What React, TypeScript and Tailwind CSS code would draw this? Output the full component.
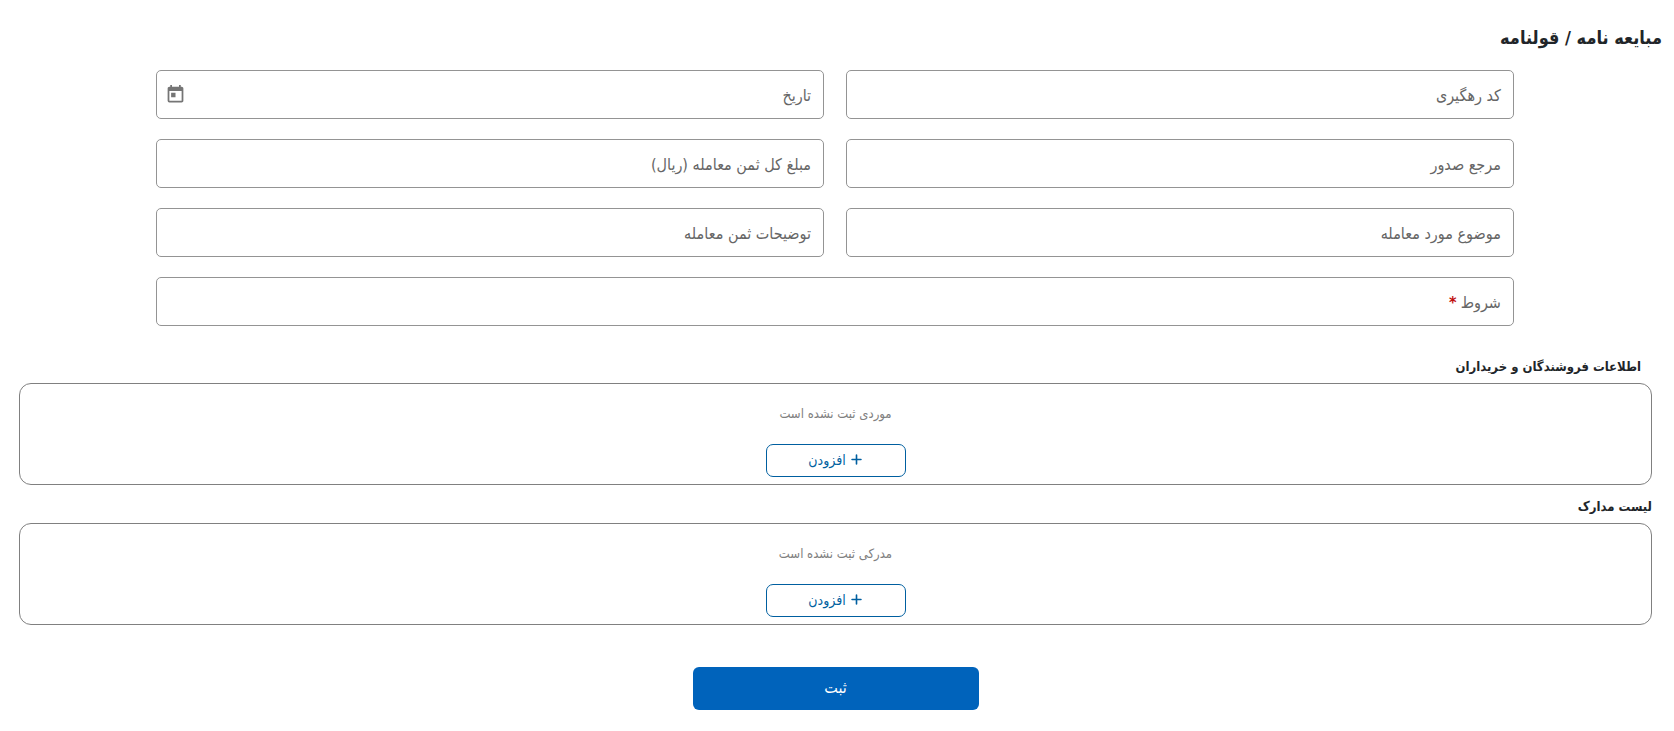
import type { ReactNode } from "react";
import { FaPlus } from "react-icons/fa6";
import { MdToday } from "react-icons/md";

const fields = [
  { id: "trackingCode", label: "کد رهگیری" },
  { id: "date", label: "تاریخ", calendar: true },
  { id: "issuer", label: "مرجع صدور" },
  { id: "totalPrice", label: "مبلغ کل ثمن معامله (ریال)" },
  { id: "subject", label: "موضوع مورد معامله" },
  { id: "priceNotes", label: "توضیحات ثمن معامله" },
  { id: "terms", label: "شروط", required: true },
];

type FieldProps = {
  id: string;
  label: string;
  calendar?: boolean;
  required?: boolean;
};

function Field({ id, label, calendar, required }: FieldProps) {
  return (
    <div
      className={`flex h-[49px] items-center rounded-[5px] border border-[#949494] pr-3 pl-2 ${
        required ? "col-span-2" : ""
      }`}
    >
      <label htmlFor={id} className="shrink-0 pt-0.5 text-base text-[#666]">
        {label}
        {required && <span className="mr-1 font-bold text-[#c00d0d]">*</span>}
      </label>
      <input id={id} name={id} required={required} className="h-full min-w-0 flex-1 px-2 text-base outline-none" />
      {calendar && (
        <button type="button" aria-label="تقویم" className="text-[#757575]">
          <MdToday className="size-[21px]" />
        </button>
      )}
    </div>
  );
}

function Panel({ title, empty, inset }: { title: ReactNode; empty: string; inset?: boolean }) {
  return (
    <section>
      <h2 className={`text-[13px] leading-8 font-bold text-[#212529] ${inset ? "pr-[11px]" : ""}`}>{title}</h2>
      <div className="flex flex-col items-center rounded-xl border border-[#808080] pt-[18px] pb-[7px]">
        <p className="text-[13px] leading-6 text-[#808080]">{empty}</p>
        <button
          type="button"
          className="mt-[18px] flex h-[33px] w-[140px] items-center justify-center gap-1 rounded-[7px] border border-[#005fa0] pb-0.5 text-sm text-[#005fa0]"
        >
          <FaPlus className="size-[13px]" />
          افزودن
        </button>
      </div>
    </section>
  );
}

export default function App() {
  return (
    <main dir="rtl" className="bg-white pt-5 pb-5 font-['DejaVu_Sans_Condensed','DejaVu_Sans',sans-serif]">
      <h1 className="pr-3 text-lg leading-9 font-bold text-[#212529]">مبایعه نامه / قولنامه</h1>
      <form className="mt-[14px] pr-[22px] pl-[19px]">
        <div className="mx-auto grid w-10/12 grid-cols-2 gap-x-[22px] gap-y-5 pr-0.5 pl-px">
          {fields.map((field) => (
            <Field key={field.id} {...field} />
          ))}
        </div>

        <div className="mt-[25px] flex flex-col gap-[6px]">
          <Panel title="اطلاعات فروشندگان و خریداران" empty="موردی ثبت نشده است" inset />
          <Panel title="لیست مدارک" empty="مدرکی ثبت نشده است" />
        </div>

        <button
          type="submit"
          className="mx-auto mt-[42px] flex h-[43px] w-[286px] items-center justify-center rounded-md bg-[#0063bb] pb-0.5 text-base text-white"
        >
          ثبت
        </button>
      </form>
    </main>
  );
}
